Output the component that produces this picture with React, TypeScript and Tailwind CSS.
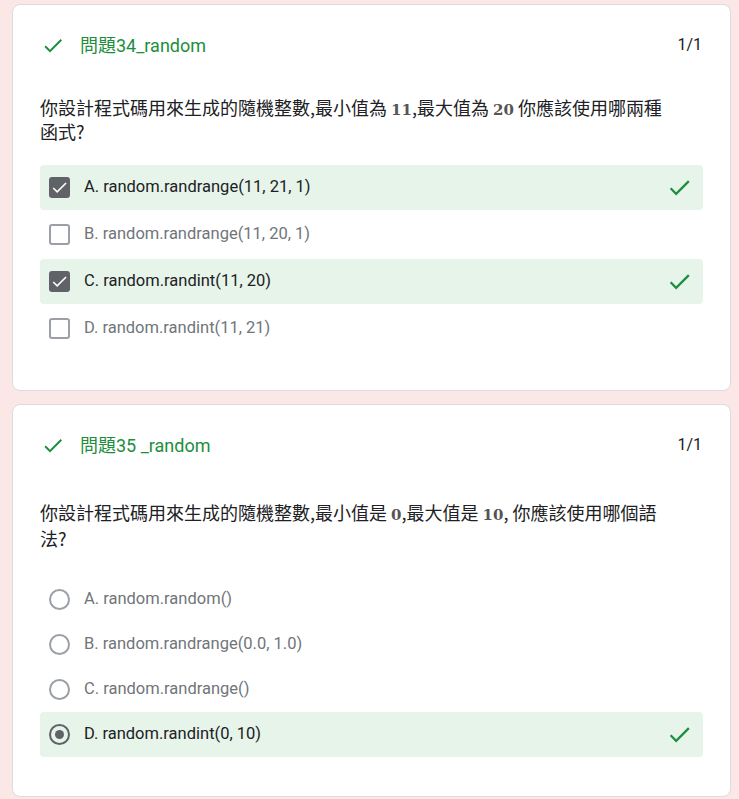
import React from "react";

type Opt = { label: string; chosen: boolean };

const q1: Opt[] = [
  { label: "A. random.randrange(11, 21, 1)", chosen: true },
  { label: "B. random.randrange(11, 20, 1)", chosen: false },
  { label: "C. random.randint(11, 20)", chosen: true },
  { label: "D. random.randint(11, 21)", chosen: false },
];

const q2: Opt[] = [
  { label: "A. random.random()", chosen: false },
  { label: "B. random.randrange(0.0, 1.0)", chosen: false },
  { label: "C. random.randrange()", chosen: false },
  { label: "D. random.randint(0, 10)", chosen: true },
];

function CheckMark({ size = 26 }: { size?: number }) {
  return (
    <svg width={size} height={size} viewBox="0 0 24 24" fill="#1e8e3e">
      <path d="M9 16.17 4.83 12l-1.42 1.41L9 19 21 7l-1.41-1.41z" />
    </svg>
  );
}

function Box({ checked }: { checked: boolean }) {
  if (checked) {
    return (
      <div className="w-[21px] h-[21px] rounded-[3px] bg-[#5f6368] flex items-center justify-center">
        <svg width="19" height="19" viewBox="0 0 24 24" fill="#fff">
          <path d="M9 16.17 4.83 12l-1.42 1.41L9 19 21 7l-1.41-1.41z" />
        </svg>
      </div>
    );
  }
  return <div className="w-[21px] h-[21px] rounded-[3px] border-2 border-[#9aa0a6]" />;
}

function Radio({ checked }: { checked: boolean }) {
  return (
    <div
      className={
        checked
          ? "w-[21px] h-[21px] rounded-full border-2 border-[#5f6368] flex items-center justify-center"
          : "w-[21px] h-[21px] rounded-full border-2 border-[#9aa0a6]"
      }
    >
      {checked && <div className="w-[9px] h-[9px] rounded-full bg-[#5f6368]" />}
    </div>
  );
}

function Row({ opt, kind }: { opt: Opt; kind: "box" | "radio" }) {
  return (
    <div
      className={
        "h-[45px] rounded-[4px] flex items-center pl-[9px] pr-[10px] " +
        (opt.chosen ? "bg-[#e6f4ea]" : "")
      }
    >
      {kind === "box" ? <Box checked={opt.chosen} /> : <Radio checked={opt.chosen} />}
      <span
        className={
          "ml-[14px] text-[16.5px] flex-1 " + (opt.chosen ? "text-[#202124]" : "text-[#70757a]")
        }
      >
        {opt.label}
      </span>
      {opt.chosen && <CheckMark size={27} />}
    </div>
  );
}

function Header({ title }: { title: string }) {
  return (
    <div className="h-[34px] flex items-center">
      <div className="ml-[1px] w-[24px] flex justify-center">
        <CheckMark size={25} />
      </div>
      <span className="ml-[15px] text-[18px] text-[#1e8e3e] flex-1">{title}</span>
      <span className="text-[16px] text-[#202124] mr-[1px]">1/1</span>
    </div>
  );
}

const num = "font-['DejaVu_Serif'] font-bold text-[15px] leading-none text-[#555]";
const line = "h-[24px] leading-[24px] whitespace-nowrap overflow-visible";

export default function App() {
  return (
    <div className="min-h-[799px] bg-[#fbe8e6] pt-[4px] pl-[12px] pr-[8px] font-['Roboto','Noto_Sans_CJK_TC',sans-serif]">
      <div className="w-[719px] bg-white border border-[#dadce0] rounded-[8px] pt-[23px] px-[27px] pb-[39px]">
        <Header title="問題34_random" />
        <div className="mt-[33px] text-[18px] text-[#202124] font-['Noto_Sans_CJK_TC',sans-serif]">
          <div className={line}>
            你設計程式碼用來生成的隨機整數,最小值為 <span className={num}>11</span>,最大值為 <span className={num}>20</span> 你應該使用哪兩種
          </div>
          <div className={line}>函式?</div>
        </div>
        <div className="mt-[22px] flex flex-col gap-[2px]">
          {q1.map((o) => (
            <Row key={o.label} opt={o} kind="box" />
          ))}
        </div>
      </div>

      <div className="mt-[13px] w-[719px] bg-white border border-[#dadce0] rounded-[8px] pt-[23px] px-[27px] pb-[39px]">
        <Header title="問題35 _random" />
        <div className="mt-[38px] text-[18px] text-[#202124] font-['Noto_Sans_CJK_TC',sans-serif]">
          <div className="h-[26px] leading-[24px] whitespace-nowrap">
            你設計程式碼用來生成的隨機整數,最小值是 <span className={num}>0</span>,最大值是 <span className={num}>10</span>, 你應該使用哪個語
          </div>
          <div className="h-[24px] leading-[24px]">法?</div>
        </div>
        <div className="mt-[27px] flex flex-col">
          {q2.map((o) => (
            <Row key={o.label} opt={o} kind="radio" />
          ))}
        </div>
      </div>
    </div>
  );
}
